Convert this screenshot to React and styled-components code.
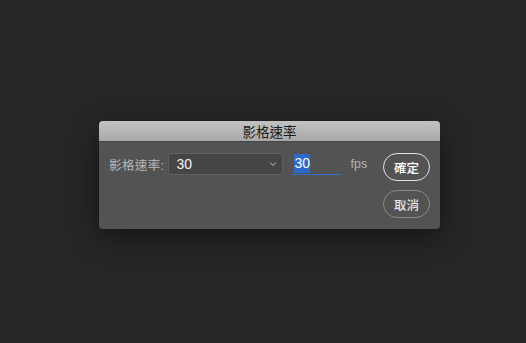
import styled, { createGlobalStyle } from "styled-components";

const GlobalStyle = createGlobalStyle`
  html, body {
    margin: 0;
    padding: 0;
    background: #262626;
    font-family: "Liberation Sans", "Noto Sans CJK TC", sans-serif;
  }
`;

const Page = styled.div`
  width: 526px;
  height: 343px;
  padding: 121px 0 0 99px;
  box-sizing: border-box;
`;

const Dialog = styled.div`
  width: 341px;
  height: 108px;
  border-radius: 4px;
  overflow: hidden;
  background: #535353;
  box-shadow: 0 8px 28px rgba(0, 0, 0, 0.45);
  display: flex;
  flex-direction: column;
`;

const TitleBar = styled.div`
  height: 21px;
  background: linear-gradient(#c2c2c2, #a9a9a9);
  border-bottom: 1px solid #454545;
  box-sizing: border-box;
  display: flex;
  align-items: center;
  justify-content: center;
  font-size: 13.5px;
  color: #1a1a1a;
`;

const Body = styled.div`
  flex: 1;
  display: flex;
  justify-content: space-between;
  padding: 11px 10px 0 10px;
`;

const Row = styled.div`
  display: flex;
  align-items: center;
  height: 22px;
`;

const Label = styled.span`
  font-size: 12.5px;
  letter-spacing: 0.4px;
  color: #b9b9b9;
  margin-right: 4px;
  white-space: nowrap;
`;

const Select = styled.div`
  width: 115px;
  height: 22px;
  box-sizing: border-box;
  border: 1px solid #5f5f5f;
  border-radius: 3px;
  background: #454545;
  display: flex;
  align-items: center;
  justify-content: space-between;
  padding: 0 5px 0 7px;
  font-size: 14px;
  color: #f2f2f2;
`;

const NumberField = styled.div`
  width: 50px;
  height: 22px;
  box-sizing: border-box;
  margin-left: 9px;
  border-bottom: 1px solid #2f6fd0;
  display: flex;
  align-items: center;
  padding-left: 2px;
  font-size: 14px;
`;

const Selected = styled.span`
  background: #2b6ac8;
  color: #ffffff;
  padding: 1px 0 2px;
`;

const Unit = styled.span`
  margin-left: 8px;
  font-size: 12.5px;
  color: #b3b3b3;
`;

const Buttons = styled.div`
  display: flex;
  flex-direction: column;
  gap: 9px;
`;

const Button = styled.button`
  width: 47px;
  height: 28px;
  border-radius: 14px;
  border: 1px solid ${(p) => (p.$primary ? "#e2e2e2" : "#8a8a8a")};
  background: transparent;
  color: ${(p) => (p.$primary ? "#ffffff" : "#e6e6e6")};
  font-family: "Noto Sans CJK TC", sans-serif;
  font-size: 12.5px;
  font-weight: 500;
  padding: 0;
`;

export default function App() {
  return (
    <>
      <GlobalStyle />
      <Page>
        <Dialog>
          <TitleBar>影格速率</TitleBar>
          <Body>
            <Row>
              <Label>影格速率:</Label>
              <Select>
                <span>30</span>
                <svg width="8" height="6" viewBox="0 0 8 6">
                  <path d="M1 1.5 L4 4.5 L7 1.5" fill="none" stroke="#c8c8c8" strokeWidth="1" />
                </svg>
              </Select>
              <NumberField>
                <Selected>30</Selected>
              </NumberField>
              <Unit>fps</Unit>
            </Row>
            <Buttons>
              <Button $primary>確定</Button>
              <Button>取消</Button>
            </Buttons>
          </Body>
        </Dialog>
      </Page>
    </>
  );
}
